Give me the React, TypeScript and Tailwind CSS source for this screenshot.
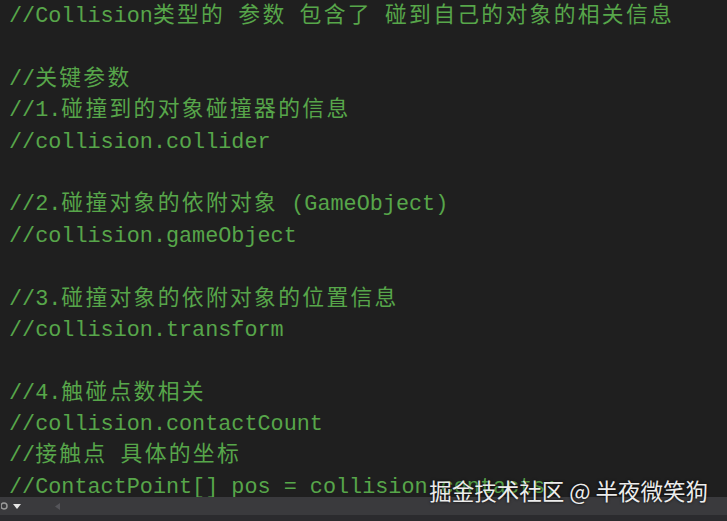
import React from "react";

// Each line: array of [text, isCjk] runs; empty array = blank line
type Run = [string, boolean];

const LINES: Run[][] = [
  [["//Collision", false], ["类型的", true], [" ", false], ["参数", true], [" ", false], ["包含了", true], [" ", false], ["碰到自己的对象的相关信息", true]],
  [],
  [["//", false], ["关键参数", true]],
  [["//1.", false], ["碰撞到的对象碰撞器的信息", true]],
  [["//collision.collider", false]],
  [],
  [["//2.", false], ["碰撞对象的依附对象", true], [" (GameObject)", false]],
  [["//collision.gameObject", false]],
  [],
  [["//3.", false], ["碰撞对象的依附对象的位置信息", true]],
  [["//collision.transform", false]],
  [],
  [["//4.", false], ["触碰点数相关", true]],
  [["//collision.contactCount", false]],
  [["//", false], ["接触点", true], [" ", false], ["具体的坐标", true]],
  [["//ContactPoint[] pos = collision.contacts;", false]],
];

function CodeLine({ runs }: { runs: Run[] }) {
  if (runs.length === 0) return <div className="h-[31.4px]" />;
  return (
    <div className="h-[31.4px] whitespace-pre">
      {runs.map(([text, cjk], i) =>
        cjk ? (
          <span key={i} className="tracking-[2.3px]">
            {text}
          </span>
        ) : (
          <span key={i}>{text}</span>
        )
      )}
    </div>
  );
}

export default function App() {
  return (
    <div className="relative flex h-[521px] w-[727px] flex-col overflow-hidden bg-[#1f1f1f]">
      <div
        className="flex-1 overflow-hidden pl-[9px] text-[21.8px] leading-[31.4px] text-[#57a64a]"
        style={{ fontFamily: '"Liberation Mono", "Noto Sans CJK SC", monospace' }}
      >
        <div className="mt-[1px]">
          {LINES.map((runs, i) => (
            <CodeLine key={i} runs={runs} />
          ))}
        </div>
      </div>

      {/* bottom scrollbar strip */}
      <div className="flex h-[24px] flex-col">
        <div className="flex h-[18px] items-center gap-[4px] bg-[#3a3a3d] pl-[1px]">
          <svg width="8" height="10" viewBox="0 0 8 10" className="text-[#9a9a9a]">
            <circle cx="3" cy="5" r="3" fill="none" stroke="currentColor" strokeWidth="1.5" />
          </svg>
          <svg width="8" height="5" viewBox="0 0 8 5">
            <path d="M0 0 L8 0 L4 5 Z" fill="#e6e6e6" />
          </svg>
          <svg width="5" height="7" viewBox="0 0 5 7" className="ml-[30px]">
            <path d="M5 0 L0 3.5 L5 7 Z" fill="#55555a" />
          </svg>
        </div>
        <div className="flex-1 bg-[#2b2b2e]" />
      </div>

      {/* watermark */}
      <div
        className="absolute bottom-[17px] right-[19px] text-[22.5px] leading-[28px] text-[#ececec] [text-shadow:0_0_3px_rgba(0,0,0,0.9)]"
        style={{ fontFamily: '"Noto Sans CJK SC", "Noto Sans", sans-serif' }}
      >
        掘金技术社区 @ 半夜微笑狗
      </div>
    </div>
  );
}
